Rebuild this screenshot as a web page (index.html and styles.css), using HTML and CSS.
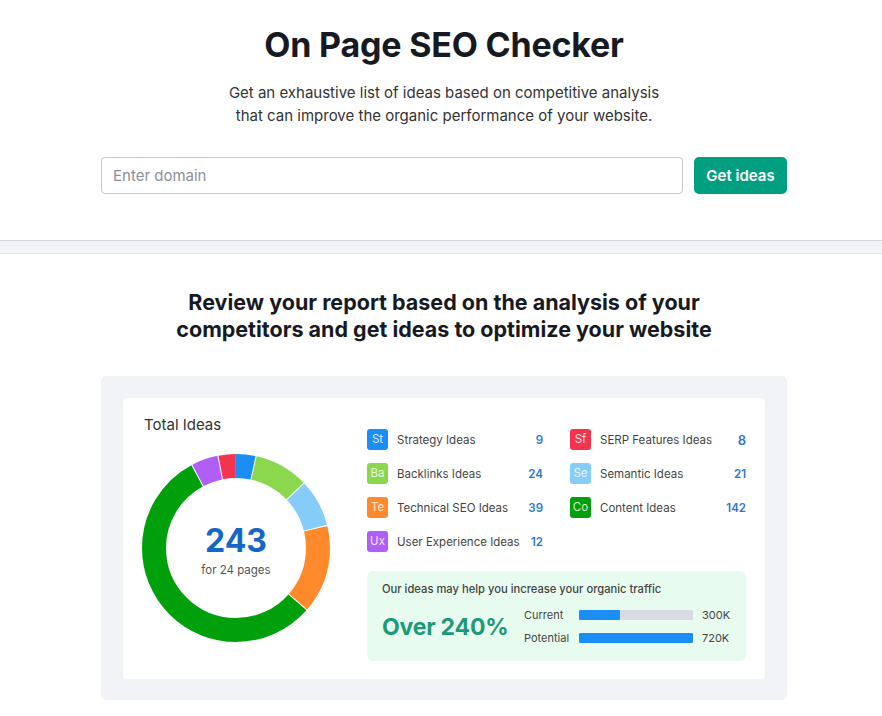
FILE: index.html
```html
<!DOCTYPE html>
<html lang="en">
<head>
<meta charset="utf-8">
<title>On Page SEO Checker</title>
<link rel="stylesheet" href="styles.css">
</head>
<body>
<header class="hero">
  <div class="wrap">
    <h1 class="title">On Page SEO Checker</h1>
    <p class="subtitle">Get an exhaustive list of ideas based on competitive analysis<br>that can improve the organic performance of your website.</p>
    <form class="search" onsubmit="return false">
      <input class="search-input" type="text" placeholder="Enter domain">
      <button class="search-btn" type="submit">Get ideas</button>
    </form>
  </div>
</header>
<div class="band"></div>
<main class="report">
  <div class="wrap">
    <h2 class="report-title">Review your report based on the analysis of your<br>competitors and get ideas to optimize your website</h2>
    <div class="card-outer">
      <div class="card">
        <div class="total">
          <div class="total-label">Total Ideas</div>
          <div class="donut">
            <svg width="190" height="190" viewBox="0 0 190 190">
              <g transform="rotate(-90 95 95)" fill="none" stroke-width="24">
                <circle cx="95" cy="95" r="82" stroke="#1b8ef5" stroke-dasharray="17.2 600" stroke-dashoffset="0"/>
                <circle cx="95" cy="95" r="82" stroke="#8bd84e" stroke-dasharray="47.5 600" stroke-dashoffset="-18.18"/>
                <circle cx="95" cy="95" r="82" stroke="#85cdf8" stroke-dasharray="41.4 600" stroke-dashoffset="-66.67"/>
                <circle cx="95" cy="95" r="82" stroke="#ff8a2b" stroke-dasharray="77.8 600" stroke-dashoffset="-109.10"/>
                <circle cx="95" cy="95" r="82" stroke="#009f0c" stroke-dasharray="285.9 600" stroke-dashoffset="-187.90"/>
                <circle cx="95" cy="95" r="82" stroke="#b05ef5" stroke-dasharray="23.2 600" stroke-dashoffset="-474.81"/>
                <circle cx="95" cy="95" r="82" stroke="#f2344e" stroke-dasharray="15.2 600" stroke-dashoffset="-499.06"/>
              </g>
            </svg>
            <div class="donut-center">
              <div class="donut-num">243</div>
              <div class="donut-sub">for 24 pages</div>
            </div>
          </div>
        </div>
        <div class="details">
          <div class="legend">
            <div class="item"><span class="tag tag-st">St</span><span class="name">Strategy Ideas</span><span class="num">9</span></div>
            <div class="item"><span class="tag tag-sf">Sf</span><span class="name">SERP Features Ideas</span><span class="num num-lg">8</span></div>
            <div class="item"><span class="tag tag-ba">Ba</span><span class="name">Backlinks Ideas</span><span class="num">24</span></div>
            <div class="item"><span class="tag tag-se">Se</span><span class="name">Semantic Ideas</span><span class="num">21</span></div>
            <div class="item"><span class="tag tag-te">Te</span><span class="name">Technical SEO Ideas</span><span class="num">39</span></div>
            <div class="item"><span class="tag tag-co">Co</span><span class="name">Content Ideas</span><span class="num">142</span></div>
            <div class="item"><span class="tag tag-ux">Ux</span><span class="name">User Experience Ideas</span><span class="num">12</span></div>
          </div>
          <div class="traffic">
            <div class="traffic-text">Our ideas may help you increase your organic traffic</div>
            <div class="traffic-row">
              <div class="traffic-big">Over 240%</div>
              <div class="bars">
                <span class="bar-label">Current</span>
                <span class="bar"><span class="bar-fill" style="width:36%"></span></span>
                <span class="bar-val">300K</span>
                <span class="bar-label">Potential</span>
                <span class="bar"><span class="bar-fill" style="width:100%"></span></span>
                <span class="bar-val">720K</span>
              </div>
            </div>
          </div>
        </div>
      </div>
    </div>
  </div>
</main>
</body>
</html>
```

FILE: styles.css
```css
* { box-sizing: border-box; }

body {
  margin: 0;
  font-family: Inter, "Noto Sans", Roboto, sans-serif;
  color: #333;
  background: #fff;
}

.wrap {
  padding-left: 6px;
  display: flex;
  flex-direction: column;
  align-items: center;
}

.hero {
  padding-top: 25px;
  padding-bottom: 46px;
}

.title {
  margin: 0;
  font-size: 34px;
  line-height: 40px;
  font-weight: 700;
  color: #171a22;
  letter-spacing: -0.2px;
  text-align: center;
}

.subtitle {
  margin: 16px 0 0;
  font-size: 15px;
  line-height: 23px;
  color: #333;
  text-align: center;
}

.search {
  margin-top: 30px;
  display: flex;
  gap: 11px;
  width: 686px;
}

.search-input {
  flex: 1;
  height: 37px;
  border: 1px solid #c4c7cf;
  border-radius: 4px;
  padding: 0 11px;
  font-family: inherit;
  font-size: 15px;
  color: #333;
  outline: none;
}

.search-input::placeholder { color: #8b8f9b; }

.search-btn {
  width: 93px;
  height: 37px;
  border: 0;
  border-radius: 5px;
  background: #009f81;
  color: #fff;
  font-family: inherit;
  font-size: 15px;
  font-weight: 600;
}

.band {
  height: 14px;
  background: #f3f4f8;
  border-top: 1px solid #d6d7dc;
  border-bottom: 1px solid #e3e4ea;
}

.report {
  padding-top: 35px;
  padding-bottom: 20px;
}

.report-title {
  margin: 0;
  font-size: 21.5px;
  line-height: 27px;
  font-weight: 700;
  color: #171a22;
  text-align: center;
}

.card-outer {
  margin-top: 33px;
  width: 686px;
  background: #f2f3f7;
  border-radius: 6px;
  padding: 22px 22px 21px;
}

.card {
  background: #fff;
  border-radius: 4px;
  display: flex;
  padding: 17px 19px 18px 21px;
}

.total {
  width: 223px;
  flex: none;
}

.total-label {
  font-size: 15px;
  line-height: 20px;
  color: #333;
  font-weight: 400;
}

.donut {
  position: relative;
  margin-top: 18px;
  margin-left: -3px;
  width: 190px;
  height: 190px;
}

.donut svg { display: block; }

.donut-center {
  position: absolute;
  inset: 0;
  display: flex;
  flex-direction: column;
  align-items: center;
  justify-content: center;
  padding-top: 4px;
}

.donut-num {
  font-size: 32px;
  line-height: 36px;
  font-weight: 700;
  color: #1467c4;
}

.donut-sub {
  margin-top: 4px;
  font-size: 11.5px;
  line-height: 15px;
  color: #555;
}

.details {
  flex: 1;
  min-width: 0;
  padding-top: 14px;
}

.legend {
  display: grid;
  grid-template-columns: 176px 176px;
  column-gap: 27px;
  row-gap: 13px;
}

.item {
  display: flex;
  align-items: center;
  height: 21px;
}

.tag {
  width: 21px;
  height: 21px;
  border-radius: 3px;
  color: rgba(255,255,255,0.85);
  font-size: 11.5px;
  line-height: 21px;
  text-align: center;
  flex: none;
}

.tag-st { background: #1b8ef5; }
.tag-sf { background: #f2344e; }
.tag-ba { background: #8bd84e; }
.tag-se { background: #85cdf8; }
.tag-te { background: #ff8a2b; }
.tag-co { background: #009f0c; }
.tag-ux { background: #b05ef5; }

.name {
  margin-left: 9px;
  font-size: 11.5px;
  color: #444;
  flex: 1;
  white-space: nowrap;
}

.num {
  font-size: 11.5px;
  font-weight: 600;
  color: #2b7acb;
}

.num-lg { font-size: 13px; }

.traffic {
  margin-top: 19px;
  background: #e7fcee;
  border-radius: 6px;
  padding: 11px 15px 15px;
}

.traffic-text {
  font-size: 11.2px;
  line-height: 15px;
  color: #444;
  font-weight: 500;
}

.traffic-row {
  margin-top: 10px;
  display: flex;
  align-items: center;
}

.traffic-big {
  width: 142px;
  font-size: 23px;
  font-weight: 700;
  color: #1a9a78;
  letter-spacing: -0.2px;
  flex: none;
}

.bars {
  display: grid;
  grid-template-columns: 55px 114px auto;
  row-gap: 7px;
  align-items: center;
}

.bar-label, .bar-val {
  font-size: 11px;
  line-height: 16px;
  color: #444;
}

.bar-val { margin-left: 9px; }

.bar {
  height: 10px;
  background: #d8dae4;
  border-radius: 1px;
  overflow: hidden;
}

.bar-fill {
  display: block;
  height: 100%;
  background: #1a8ef5;
  border-radius: 1px;
}
```
